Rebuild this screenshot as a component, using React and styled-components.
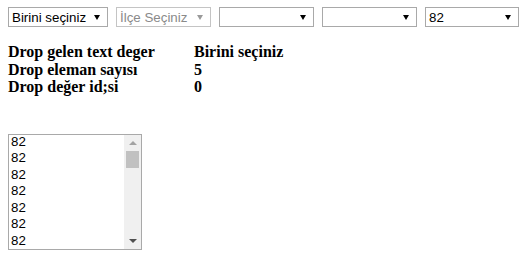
import { Fragment } from 'react';
import styled, { createGlobalStyle } from 'styled-components';

const GlobalStyle = createGlobalStyle`
  body {
    margin: 0;
    background: #fff;
    font-family: "Liberation Sans", Arial, sans-serif;
  }
`;

const Page = styled.div`
  padding: 7px 8px;
`;

const SelectRow = styled.div`
  display: flex;
  gap: 8px;
`;

const DropBox = styled.div`
  box-sizing: border-box;
  width: ${(p) => p.$width}px;
  height: 20px;
  display: flex;
  align-items: center;
  justify-content: space-between;
  padding: 0 7px 0 3px;
  border: 1px solid ${(p) => (p.$disabled ? '#c4c4c4' : '#a9a9a9')};
  background: #fff;
  color: ${(p) => (p.$disabled ? '#8a8a8a' : '#000')};
  font-size: 13.33px;
  white-space: nowrap;
`;

const Caret = styled.span`
  width: 0;
  height: 0;
  border-left: 3px solid transparent;
  border-right: 3px solid transparent;
  border-top: 5px solid ${(p) => (p.$disabled ? '#9a9a9a' : '#000')};
`;

const InfoGrid = styled.div`
  display: grid;
  grid-template-columns: 186px auto;
  margin-top: 16px;
  font-family: "Liberation Serif", "Times New Roman", serif;
  font-weight: bold;
  font-size: 16px;
  line-height: 17.5px;
  color: #000;
`;

const ListBox = styled.div`
  box-sizing: border-box;
  width: 134px;
  height: 116px;
  margin-top: 38px;
  display: flex;
  border: 1px solid #a9a9a9;
  background: #fff;
`;

const Options = styled.div`
  flex: 1;
  overflow: hidden;
`;

const OptionItem = styled.div`
  height: 16.6px;
  line-height: 14px;
  padding: 0 2px;
  font-size: 13.33px;
  color: #000;
`;

const ScrollTrack = styled.div`
  width: 17px;
  display: flex;
  flex-direction: column;
  background: #f0f0f0;
`;

const ScrollButton = styled.div`
  height: 16px;
  display: flex;
  align-items: center;
  justify-content: center;
`;

const Tri = styled.span`
  width: 0;
  height: 0;
  border-left: 4px solid transparent;
  border-right: 4px solid transparent;
  ${(p) =>
    p.$up
      ? 'border-bottom: 4px solid #a3a3a3;'
      : 'border-top: 4px solid #505050;'}
`;

const Thumb = styled.div`
  height: 17px;
  margin: 0 2px;
  background: #c1c1c1;
`;

const Spacer = styled.div`
  flex: 1;
`;

const selects = [
  { width: 100, label: 'Birini seçiniz' },
  { width: 95, label: 'İlçe Seçiniz', disabled: true },
  { width: 95, label: '' },
  { width: 95, label: '' },
  { width: 94, label: '82' },
];

const info = [
  ['Drop gelen text deger', 'Birini seçiniz'],
  ['Drop eleman sayısı', '5'],
  ['Drop değer id;si', '0'],
];

const items = Array.from({ length: 7 }, () => '82');

const App = () => {
  return (
    <Page>
      <GlobalStyle />
      <SelectRow>
        {selects.map((s, i) => (
          <DropBox key={i} $width={s.width} $disabled={s.disabled}>
            <span>{s.label}</span>
            <Caret $disabled={s.disabled} />
          </DropBox>
        ))}
      </SelectRow>

      <InfoGrid>
        {info.map(([k, v]) => (
          <Fragment key={k}>
            <div>{k}</div>
            <div>{v}</div>
          </Fragment>
        ))}
      </InfoGrid>

      <ListBox>
        <Options>
          {items.map((it, i) => (
            <OptionItem key={i}>{it}</OptionItem>
          ))}
        </Options>
        <ScrollTrack>
          <ScrollButton>
            <Tri $up />
          </ScrollButton>
          <Thumb />
          <Spacer />
          <ScrollButton>
            <Tri />
          </ScrollButton>
        </ScrollTrack>
      </ListBox>
    </Page>
  );
};

export default App;
